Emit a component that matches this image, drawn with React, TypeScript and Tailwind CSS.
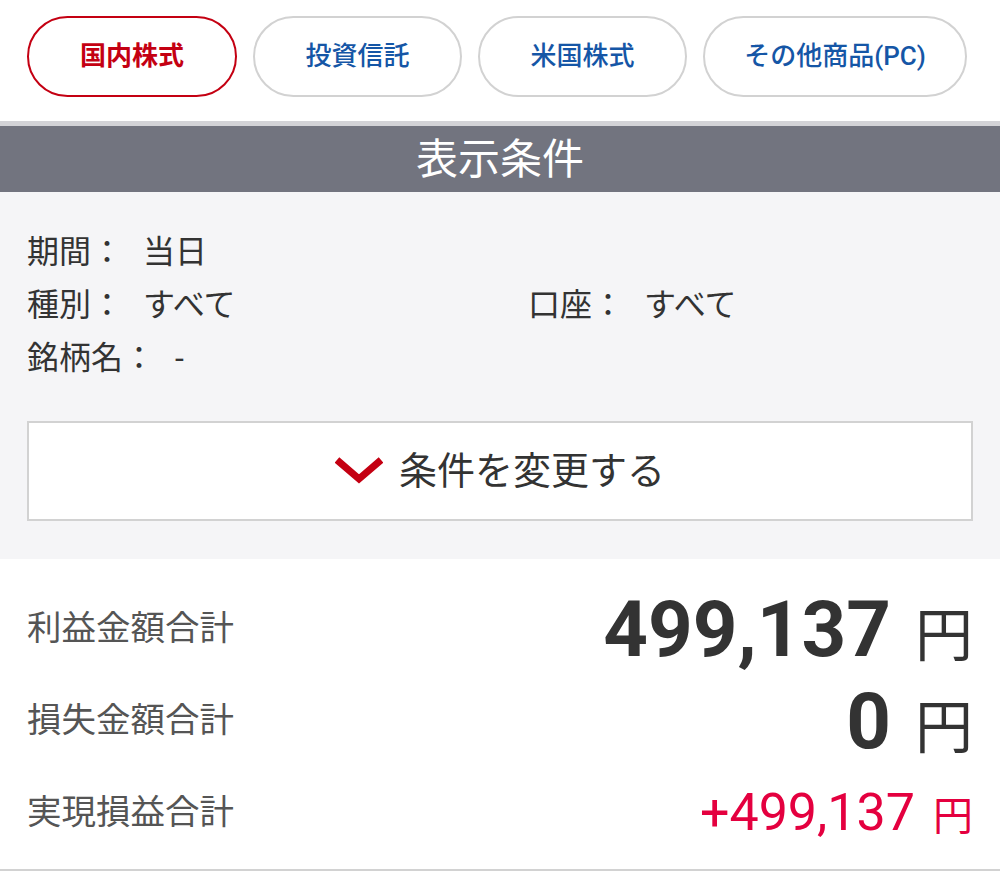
const jp = "font-['Roboto','Noto_Sans_CJK_JP',sans-serif]";

const tabs = [
  { label: "国内株式", w: "w-[210px]", active: true },
  { label: "投資信託", w: "w-[209px]", active: false },
  { label: "米国株式", w: "w-[209px]", active: false },
  { label: "その他商品(PC)", w: "w-[264px]", active: false },
];

function Chevron() {
  return (
    <svg width="48" height="28" viewBox="0 0 48 28" className="shrink-0">
      <path d="M2 3 L24 22 L46 3" fill="none" stroke="#c40012" strokeWidth="7" />
    </svg>
  );
}

export default function App() {
  return (
    <div className={`w-[1000px] h-[875px] bg-white ${jp}`}>
      {/* Product tabs */}
      <div className="flex gap-4 px-[27px] pt-[16px] pb-[24px]">
        {tabs.map((t) => (
          <button
            key={t.label}
            className={`${t.w} h-[81px] rounded-full border-2 flex items-center justify-center text-[26px] ${
              t.active
                ? "border-[#c40012] text-[#c40012] font-bold"
                : "border-[#d2d2d2] text-[#1556a6] font-medium"
            }`}
          >
            {t.label}
          </button>
        ))}
      </div>

      {/* Display conditions */}
      <div className="border-t-[5px] border-[#d3d3d7]">
        <div className="h-[66px] bg-[#72747f] flex items-center justify-center text-white text-[42px]">
          表示条件
        </div>
        <div className="bg-[#f5f5f7] px-[27px] pt-[34px] pb-[38px] text-[#333] text-[32px]">
          <div className="leading-[53px]">
            <div className="flex">
              <span>期間：</span>
              <span className="ml-[20px]">当日</span>
            </div>
            <div className="flex">
              <div className="flex w-[501px]">
                <span>種別：</span>
                <span className="ml-[20px]">すべて</span>
              </div>
              <div className="flex">
                <span>口座：</span>
                <span className="ml-[20px]">すべて</span>
              </div>
            </div>
            <div className="flex">
              <span>銘柄名：</span>
              <span className="ml-[20px]">-</span>
            </div>
          </div>
          <button className="mt-[36px] w-full h-[100px] bg-white border-2 border-[#d2d2d2] flex items-center justify-center gap-[16px] text-[38px] text-[#333]">
            <Chevron />
            <span>条件を変更する</span>
          </button>
        </div>
      </div>

      {/* Summary */}
      <div className="pt-[24px] pb-[10px] px-[27px] border-b-2 border-[#d2d2d2]">
        <div className="h-[92px] flex items-center justify-between">
          <span className="text-[34.5px] text-[#555]">利益金額合計</span>
          <span className="flex items-baseline text-[#333]">
            <span className="text-[78px] font-bold">499,137</span>
            <span className="text-[58px] ml-[24px]">円</span>
          </span>
        </div>
        <div className="h-[92px] flex items-center justify-between">
          <span className="text-[34.5px] text-[#555]">損失金額合計</span>
          <span className="flex items-baseline text-[#333]">
            <span className="text-[78px] font-bold">0</span>
            <span className="text-[58px] ml-[24px]">円</span>
          </span>
        </div>
        <div className="h-[92px] flex items-center justify-between">
          <span className="text-[34.5px] text-[#555]">実現損益合計</span>
          <span className="flex items-baseline text-[#e4003f]">
            <span className="text-[52px]">+499,137</span>
            <span className="text-[40px] ml-[18px]">円</span>
          </span>
        </div>
      </div>
    </div>
  );
}
